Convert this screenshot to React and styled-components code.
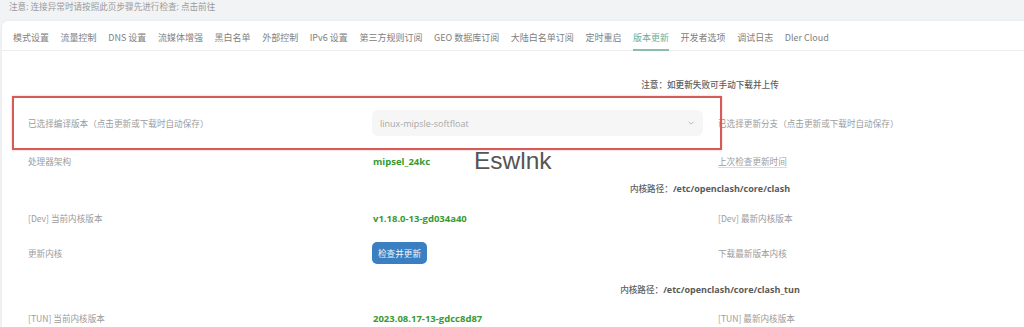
import React from 'react'
import styled, { createGlobalStyle } from 'styled-components'

const GlobalStyle = createGlobalStyle`
  html, body {
    margin: 0;
    padding: 0;
    background: #f2f3f5;
    overflow: hidden;
    font-family: "Noto Sans CJK SC", "Noto Sans", sans-serif;
  }
`

const Page = styled.div`
  width: 1024px;
  height: 327px;
  overflow: hidden;
`

const Notice = styled.div`
  height: 21px;
  padding-left: 9px;
  font-size: 8.6px;
  line-height: 12px;
  color: #9a9a9a;
`

const Card = styled.div`
  position: relative;
  margin-left: 2px;
  width: 1440px;
  height: 306px;
  background: #fff;
  border-top-left-radius: 6px;
  box-shadow: 0 0 3px rgba(0, 0, 0, 0.06);
`

const TabBar = styled.div`
  display: flex;
  gap: 11.6px;
  height: 29px;
  padding-left: 11px;
  border-bottom: 1px solid #ececec;
`

const Tab = styled.div`
  display: flex;
  align-items: center;
  padding-top: 4px;
  font-size: 9px;
  color: ${({ active }) => (active ? '#6fab98' : '#808080')};
  border-bottom: 2px solid ${({ active }) => (active ? '#8bbcae' : 'transparent')};
  box-sizing: border-box;
  height: 30px;
  white-space: nowrap;
`

const Table = styled.div`
  display: flex;
  flex-direction: column;
  margin-top: 19px;
  margin-left: 11px;
  width: 1380px;
`

const Heading = styled.div`
  height: ${({ h }) => h}px;
  display: flex;
  align-items: center;
  justify-content: center;
  padding-left: 14px;
  font-size: 8.6px;
  font-weight: 500;
  color: #5e5e5e;
`

const Path = styled.span`
  font-family: "Open Sans", "Noto Sans", sans-serif;
  font-weight: 700;
  font-size: 9px;
  color: #5a5a5a;
`

const Row = styled.div`
  height: ${({ h }) => h}px;
  display: grid;
  grid-template-columns: 345px 345px 345px 345px;
  align-items: center;
`

const Cell = styled.div`
  padding-left: 15px;
  font-size: 8.6px;
  color: #9c9c9c;
  white-space: nowrap;
`

const Link = styled.span`
  text-decoration: underline;
  text-decoration-color: #dadada;
  text-underline-offset: 2px;
`

const Value = styled.span`
  font-family: "Open Sans", "Noto Sans", sans-serif;
  font-weight: 700;
  font-size: 9.5px;
  color: #379a32;
`

const Select = styled.div`
  display: flex;
  align-items: center;
  justify-content: space-between;
  width: 331px;
  height: 26px;
  margin-left: -1px;
  padding: 0 8px;
  box-sizing: border-box;
  background: #f6f6f6;
  border-radius: 6px;
  font-family: "Open Sans", "Noto Sans", sans-serif;
  font-size: 9px;
  color: #a8a8a8;
`

const Button = styled.button`
  height: 22px;
  margin-left: -1px;
  padding: 0 6px;
  border: none;
  border-radius: 5px;
  background: #3a7fc1;
  color: #f2f6fb;
  font-family: "Noto Sans CJK SC", sans-serif;
  font-size: 8.6px;
  cursor: pointer;
`

const Highlight = styled.div`
  position: absolute;
  left: 10px;
  top: 75px;
  width: 706px;
  height: 50px;
  border: 2px solid #d65a58;
  box-shadow: 0 0 2px rgba(214, 90, 88, 0.4);
  pointer-events: none;
`

const Watermark = styled.div`
  position: absolute;
  left: 472px;
  top: 126px;
  font-family: "Liberation Sans", Arial, sans-serif;
  font-size: 24.5px;
  color: #555;
  pointer-events: none;
`

const tabs = [
  '模式设置', '流量控制', 'DNS 设置', '流媒体增强', '黑白名单', '外部控制', 'IPv6 设置',
  '第三方规则订阅', 'GEO 数据库订阅', '大陆白名单订阅', '定时重启', '版本更新',
  '开发者选项', '调试日志', 'Dler Cloud',
]

const Chevron = () => (
  <svg width="8" height="8" viewBox="0 0 10 10">
    <path d="M2 3.5 L5 6.5 L8 3.5" fill="none" stroke="#b5b5b5" strokeWidth="1.2" />
  </svg>
)

const App = () => {
  return (
    <Page>
      <GlobalStyle />
      <Notice>注意: 连接异常时请按照此页步骤先进行检查: 点击前往</Notice>
      <Card>
        <TabBar>
          {tabs.map((t) => <Tab key={t} active={t === '版本更新'}>{t}</Tab>)}
        </TabBar>

        <Table>
          <Heading h={28}>注意：如更新失败可手动下载并上传</Heading>

          <Row h={50}>
            <Cell>已选择编译版本（点击更新或下载时自动保存）</Cell>
            <Cell>
              <Select>
                linux-mipsle-softfloat
                <Chevron />
              </Select>
            </Cell>
            <Cell>已选择更新分支（点击更新或下载时自动保存）</Cell>
            <Cell />
          </Row>

          <Row h={26}>
            <Cell>处理器架构</Cell>
            <Cell><Value>mipsel_24kc</Value></Cell>
            <Cell><Link>上次检查更新时间</Link></Cell>
            <Cell />
          </Row>

          <Heading h={28}>内核路径：<Path>/etc/openclash/core/clash</Path></Heading>

          <Row h={32}>
            <Cell>[Dev] 当前内核版本</Cell>
            <Cell><Value>v1.18.0-13-gd034a40</Value></Cell>
            <Cell>[Dev] 最新内核版本</Cell>
            <Cell />
          </Row>

          <Row h={38}>
            <Cell>更新内核</Cell>
            <Cell><Button>检查并更新</Button></Cell>
            <Cell>下载最新版本内核</Cell>
            <Cell />
          </Row>

          <Heading h={34}>内核路径：<Path>/etc/openclash/core/clash_tun</Path></Heading>

          <Row h={24}>
            <Cell>[TUN] 当前内核版本</Cell>
            <Cell><Value>2023.08.17-13-gdcc8d87</Value></Cell>
            <Cell>[TUN] 最新内核版本</Cell>
            <Cell />
          </Row>
        </Table>

        <Highlight />
        <Watermark>Eswlnk</Watermark>
      </Card>
    </Page>
  )
}

export default App
